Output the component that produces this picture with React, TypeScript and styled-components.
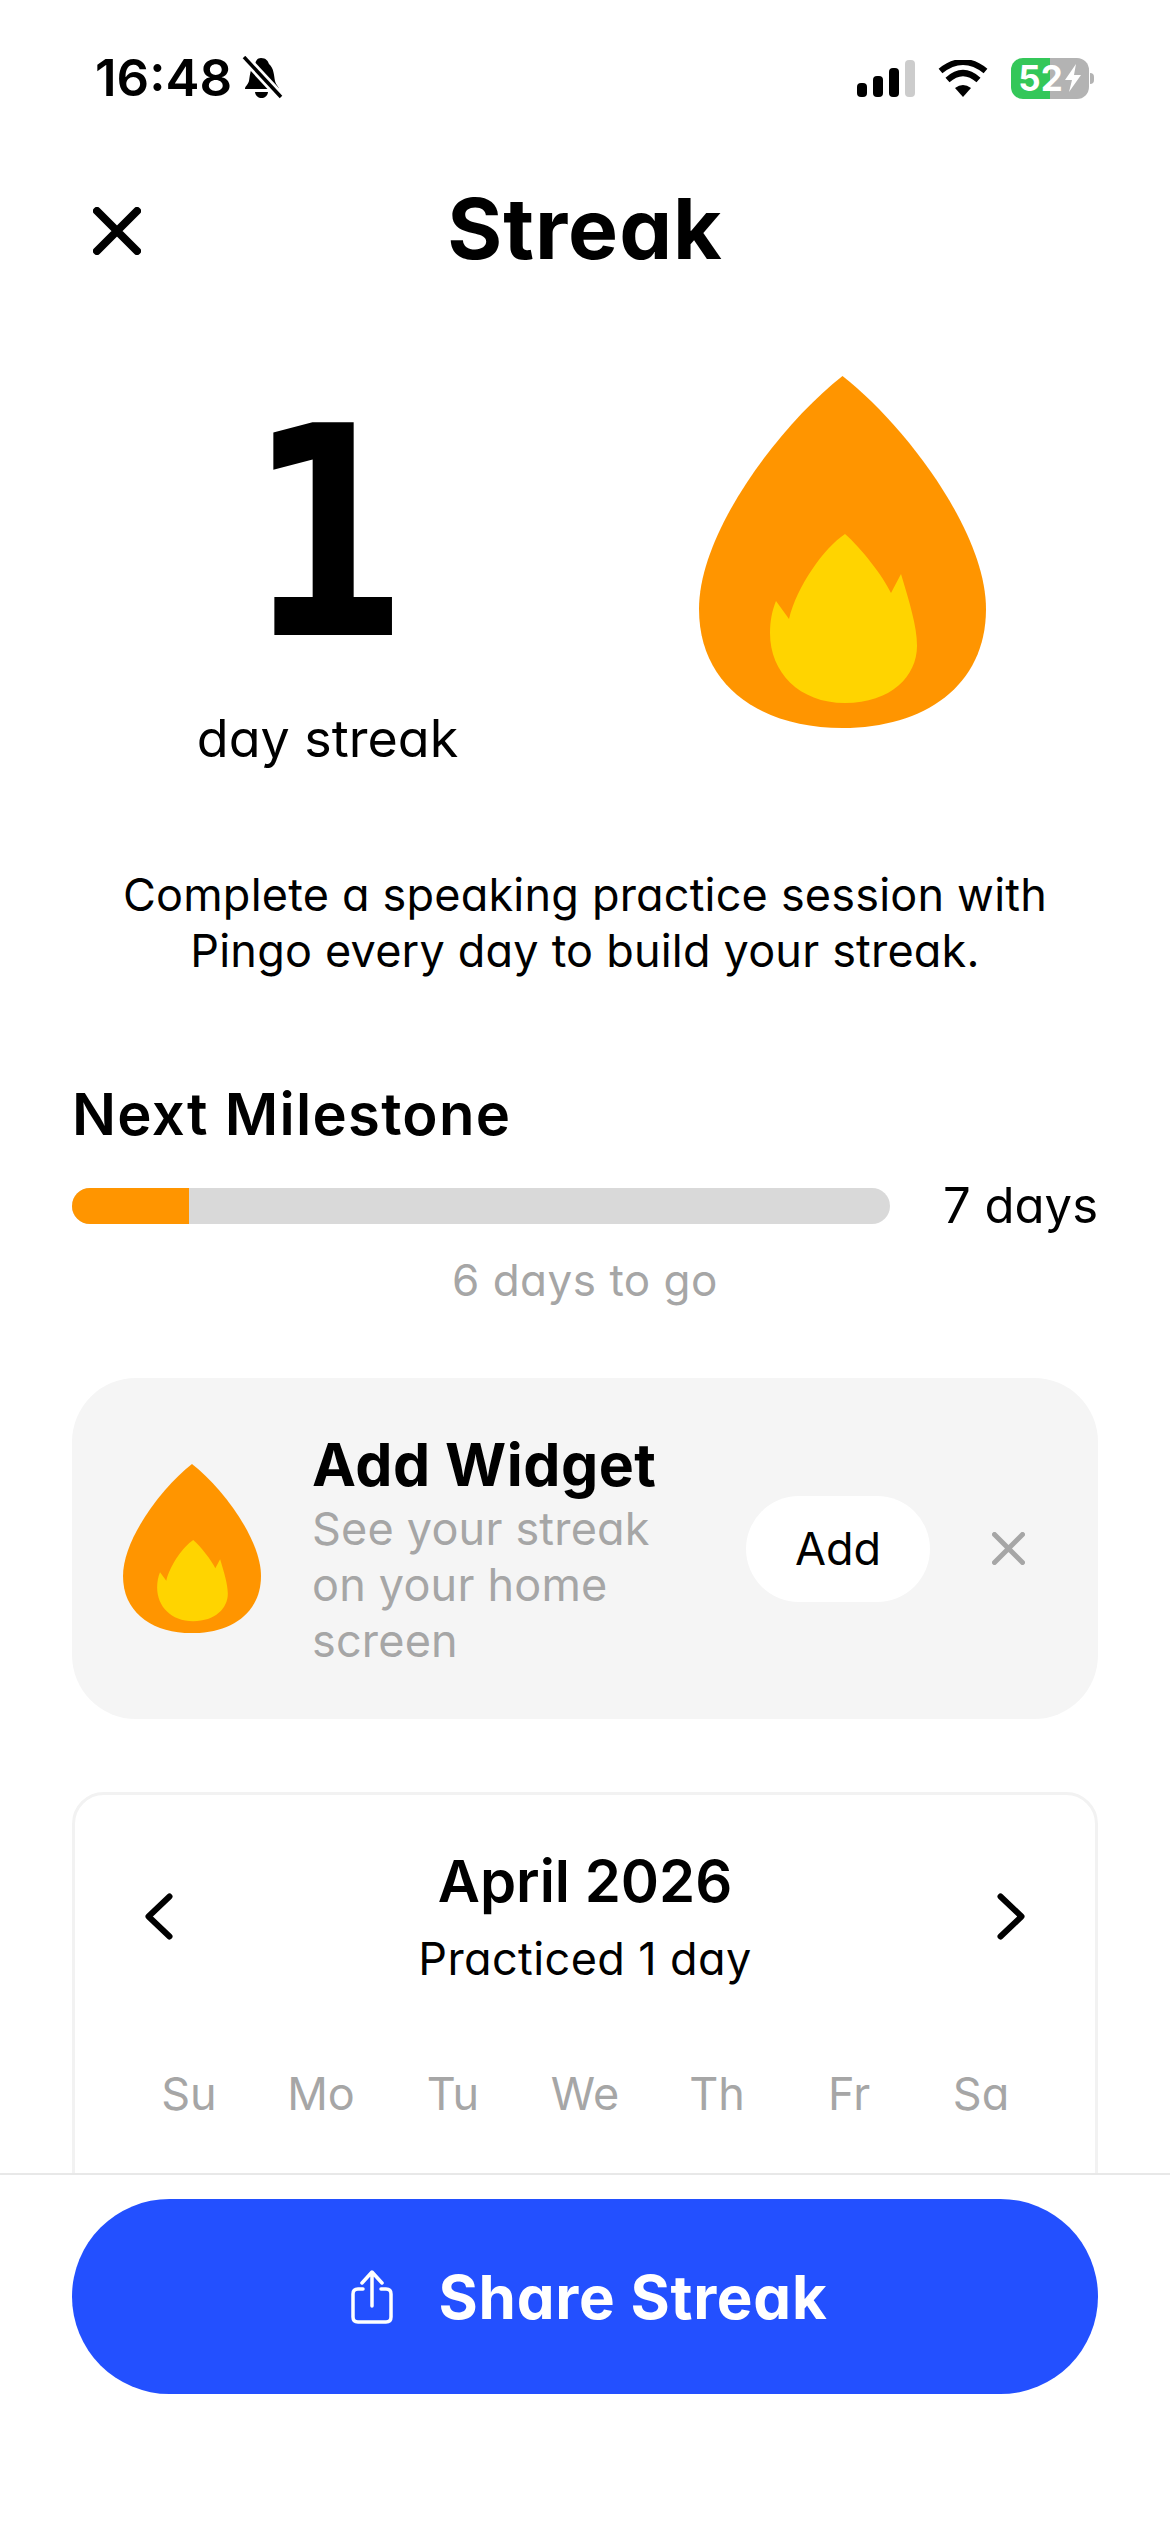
import React from 'react'
import styled, { createGlobalStyle } from 'styled-components'

const GlobalStyle = createGlobalStyle`
    html, body {
        margin: 0;
        padding: 0;
        background: #fff;
    }
    * {
        box-sizing: border-box;
    }
`

const Flame = ({ size }: { size: number }) => (
    <svg width={size} height={size * 1.2265} viewBox="0 0 287 352">
        <path
            d="M143.500 0 C205 48 287 155 287 233 C287 310 225 352 143.500 352 C62 352 0 310 0 233 C0 155 82 48 143.500 0 Z"
            fill="#ff9500"
        />
        <path
            d="M146 158 C162 172 184 200 192 217 L202 198 C210 225 218 250 218 270 C218 300 192 327 146 327 C100 327 71 296 71 257 C71 245 73 235 77 225 L90 243 C98 210 125 172 146 158 Z"
            fill="#ffd400"
        />
    </svg>
)

const StatusBarIcons = () => (
    <StatusRight>
        <svg width="58" height="37" viewBox="0 0 58 37">
            <rect x="0" y="23" width="10" height="14" rx="4" fill="#000" />
            <rect x="16" y="16" width="10" height="21" rx="4" fill="#000" />
            <rect x="32" y="8" width="10" height="29" rx="4" fill="#000" />
            <rect x="48" y="0" width="10" height="37" rx="4" fill="#ccc" />
        </svg>
        <svg width="50" height="37" viewBox="0 0 50 37">
            <path d="M25 37 L17 28 Q25 22 33 28 Z" fill="#000" />
            <path d="M9.500 20 Q25 6 40.500 20" fill="none" stroke="#000" strokeWidth="6" />
            <path d="M2.500 11 Q25 -7 47.500 11" fill="none" stroke="#000" strokeWidth="6" />
        </svg>
        <Battery>
            <BatteryBody>
                <BatteryText>52</BatteryText>
                <svg width="18" height="28" viewBox="0 0 18 28">
                    <path d="M12 0 L1 16 L8 16 L5 28 L17 11 L10 11 Z" fill="#fff" />
                </svg>
            </BatteryBody>
            <BatteryNub />
        </Battery>
    </StatusRight>
)

const BellOff = () => (
    <svg width="42" height="44" viewBox="0 0 42 44">
        <path
            d="M20 2 C25 2 27 5 28 8 C33 12 33 20 34 25 C35 29 38 31 38 33 L4 33 C4 30 7 29 8 25 C9 20 9 12 14 8 C15 5 16 2 20 2 Z"
            fill="#000"
        />
        <path d="M14 36 L27 36 C26 44 15 44 14 36 Z" fill="#000" />
        <path d="M3 1 L40 41" stroke="#fff" strokeWidth="9" />
        <path d="M3 1 L40 41" stroke="#000" strokeWidth="3.500" />
    </svg>
)

const CloseIcon = ({ size, color, stroke }: { size: number; color: string; stroke: number }) => (
    <svg width={size} height={size} viewBox={`0 0 ${size} ${size}`}>
        <path
            d={`M${stroke / 2} ${stroke / 2} L${size - stroke / 2} ${size - stroke / 2} M${size - stroke / 2} ${stroke / 2} L${stroke / 2} ${size - stroke / 2}`}
            stroke={color}
            strokeWidth={stroke}
            strokeLinecap="round"
        />
    </svg>
)

const Chevron = ({ right }: { right?: boolean }) => (
    <svg width="28" height="47" viewBox="0 0 28 47">
        <path
            d={right ? 'M3.500 3.500 L24.500 23.500 L3.500 43.500' : 'M24.500 3.500 L3.500 23.500 L24.500 43.500'}
            fill="none"
            stroke="#000"
            strokeWidth="6"
            strokeLinecap="round"
            strokeLinejoin="round"
        />
    </svg>
)

const ShareIcon = () => (
    <svg width="42" height="54" viewBox="0 0 42 54" fill="none" stroke="#fff" strokeWidth="3.500" strokeLinecap="round" strokeLinejoin="round">
        <path d="M12 19 L7 19 Q2 19 2 24 L2 47 Q2 52 7 52 L35 52 Q40 52 40 47 L40 24 Q40 19 35 19 L30 19" />
        <path d="M21 36 L21 3 M11 13 L21 2 L31 13" />
    </svg>
)

const WEEKDAYS = ['Su', 'Mo', 'Tu', 'We', 'Th', 'Fr', 'Sa']

export default function App() {
    return (
        <>
            <GlobalStyle />
            <Screen>
                <Scroll>
                    <StatusBar>
                        <Time>16:48</Time>
                        <BellOff />
                        <StatusBarIcons />
                    </StatusBar>
                    <Header>
                        <CloseButton>
                            <CloseIcon size={48} color="#000" stroke={8} />
                        </CloseButton>
                        <Title>Streak</Title>
                    </Header>
                    <Hero>
                        <CountColumn>
                            <Count>1</Count>
                            <CountLabel>day streak</CountLabel>
                        </CountColumn>
                        <Flame size={287} />
                    </Hero>
                    <Description>
                        Complete a speaking practice session with
                        <br />
                        Pingo every day to build your streak.
                    </Description>
                    <SectionTitle>Next Milestone</SectionTitle>
                    <ProgressRow>
                        <ProgressTrack>
                            <ProgressFill style={{ width: `${(1 / 7) * 100}%` }} />
                        </ProgressTrack>
                        <ProgressLabel>7 days</ProgressLabel>
                    </ProgressRow>
                    <ProgressHint>6 days to go</ProgressHint>
                    <WidgetCard>
                        <Flame size={138} />
                        <WidgetText>
                            <WidgetTitle>Add Widget</WidgetTitle>
                            <WidgetSub>See your streak on your home screen</WidgetSub>
                        </WidgetText>
                        <AddButton>Add</AddButton>
                        <DismissButton>
                            <CloseIcon size={33} color="#a6a6a6" stroke={5} />
                        </DismissButton>
                    </WidgetCard>
                    <CalendarCard>
                        <CalendarHeader>
                            <Chevron />
                            <MonthBlock>
                                <MonthTitle>April 2026</MonthTitle>
                                <MonthSub>Practiced 1 day</MonthSub>
                            </MonthBlock>
                            <Chevron right />
                        </CalendarHeader>
                        <WeekRow>
                            {WEEKDAYS.map(day => (
                                <WeekDay key={day}>{day}</WeekDay>
                            ))}
                        </WeekRow>
                    </CalendarCard>
                </Scroll>
                <Footer>
                    <ShareButton>
                        <ShareIcon />
                        <span>Share Streak</span>
                    </ShareButton>
                </Footer>
            </Screen>
        </>
    )
}

const Screen = styled.div`
    width: 1170px;
    height: 2532px;
    display: flex;
    flex-direction: column;
    background: #fff;
    color: #000;
    font-family: Inter, 'Liberation Sans', sans-serif;
    font-feature-settings: 'cv11' 1;
    overflow: hidden;
`

const Scroll = styled.div`
    flex: 1;
    min-height: 0;
    overflow: hidden;
    padding: 0 72px;
`

const StatusBar = styled.div`
    display: flex;
    align-items: center;
    height: 44px;
    margin: 56px 0 0 23px;
    padding-right: 4px;
`

const Time = styled.div`
    font-size: 51px;
    font-weight: 600;
    line-height: 44px;
    margin-right: 9px;
    font-feature-settings: normal;
`

const StatusRight = styled.div`
    margin-left: auto;
    display: flex;
    align-items: center;
    gap: 23px;
`

const Battery = styled.div`
    display: flex;
    align-items: center;
    gap: 1px;
`

const BatteryBody = styled.div`
    width: 78px;
    height: 41px;
    border-radius: 12px;
    background: linear-gradient(90deg, #34c759 0 50%, #b3b3b3 50% 100%);
    display: flex;
    align-items: center;
    justify-content: center;
    gap: 1px;
`

const BatteryText = styled.span`
    color: #fff;
    font-size: 35px;
    font-weight: 700;
    line-height: 1;
`

const BatteryNub = styled.div`
    width: 4px;
    height: 11px;
    border-radius: 0 4px 4px 0;
    background: #b3b3b3;
`

const Header = styled.div`
    position: relative;
    height: 84px;
    margin-top: 87px;
    display: flex;
    align-items: center;
    justify-content: center;
`

const CloseButton = styled.div`
    position: absolute;
    left: 21px;
    top: 20px;
    display: flex;
`

const Title = styled.h1`
    margin: 0;
    font-size: 84px;
    font-weight: 700;
    letter-spacing: 1px;
    line-height: 84px;
`

const Hero = styled.div`
    display: flex;
    align-items: flex-start;
    margin-top: 105px;
    padding-left: 125px;
    gap: 241px;
`

const CountColumn = styled.div`
    display: flex;
    flex-direction: column;
    align-items: center;
    width: 261px;
    padding-top: 52px;
`

const Count = styled.div`
    font-family: 'DejaVu Sans', sans-serif;
    font-size: 292px;
    font-weight: 700;
    line-height: 213px;
    transform: scaleX(0.79);
`

const CountLabel = styled.div`
    font-size: 52px;
    font-weight: 400;
    line-height: 60px;
    margin-top: 68px;
    white-space: nowrap;
`

const Description = styled.p`
    margin: 98px 0 0;
    text-align: center;
    font-size: 45px;
    letter-spacing: 0.2px;
    line-height: 56px;
    font-weight: 400;
`

const SectionTitle = styled.h2`
    margin: 100px 0 0;
    font-size: 58px;
    font-weight: 600;
    letter-spacing: 1.3px;
    line-height: 70px;
`

const ProgressRow = styled.div`
    display: flex;
    align-items: center;
    justify-content: space-between;
    margin-top: 27px;
`

const ProgressTrack = styled.div`
    width: 818px;
    height: 36px;
    border-radius: 18px;
    background: #d9d9d9;
    overflow: hidden;
`

const ProgressFill = styled.div`
    height: 100%;
    background: #ff9500;
`

const ProgressLabel = styled.div`
    font-size: 49px;
    line-height: 60px;
`

const ProgressHint = styled.div`
    text-align: center;
    color: #a6a6a6;
    font-size: 44px;
    letter-spacing: 0.5px;
    line-height: 56px;
    margin-top: 16px;
`

const WidgetCard = styled.div`
    display: flex;
    align-items: center;
    height: 341px;
    margin-top: 70px;
    padding: 0 51px;
    background: #f5f5f5;
    border-radius: 64px;
`

const WidgetText = styled.div`
    width: 350px;
    margin: 3px 0 0 51px;
`

const WidgetTitle = styled.div`
    font-size: 59px;
    font-weight: 700;
    letter-spacing: 0.5px;
    line-height: 66px;
    margin-bottom: 3px;
`

const WidgetSub = styled.div`
    color: #a6a6a6;
    font-size: 45px;
    letter-spacing: 0.2px;
    line-height: 56px;
`

const AddButton = styled.div`
    width: 184px;
    height: 106px;
    margin-left: 84px;
    border-radius: 53px;
    background: #fff;
    display: flex;
    align-items: center;
    justify-content: center;
    font-size: 45px;
    font-weight: 400;
`

const DismissButton = styled.div`
    display: flex;
    margin-left: 62px;
`

const CalendarCard = styled.div`
    margin-top: 73px;
    min-height: 700px;
    border: 3px solid #f2f2f2;
    border-radius: 32px;
    padding: 51px 48px 0;
`

const CalendarHeader = styled.div`
    display: flex;
    align-items: center;
    justify-content: space-between;
    padding: 0 22px;
`

const MonthBlock = styled.div`
    text-align: center;
`

const MonthTitle = styled.div`
    font-size: 58px;
    font-weight: 600;
    line-height: 70px;
`

const MonthSub = styled.div`
    font-size: 45px;
    font-weight: 400;
    letter-spacing: 0.4px;
    line-height: 56px;
    margin-top: 15px;
`

const WeekRow = styled.div`
    display: grid;
    grid-template-columns: repeat(7, 1fr);
    margin-top: 79px;
`

const WeekDay = styled.div`
    text-align: center;
    color: #a6a6a6;
    font-size: 45px;
    font-weight: 400;
    line-height: 56px;
`

const Footer = styled.div`
    height: 359px;
    flex: none;
    border-top: 2px solid #e8e8e8;
    background: #fff;
    padding: 24px 72px 0;
`

const ShareButton = styled.div`
    height: 195px;
    border-radius: 98px;
    padding-left: 8px;
    background: #2350ff;
    color: #fff;
    display: flex;
    align-items: center;
    justify-content: center;
    gap: 46px;
    font-size: 60px;
    font-weight: 700;
    letter-spacing: 0.75px;
`
